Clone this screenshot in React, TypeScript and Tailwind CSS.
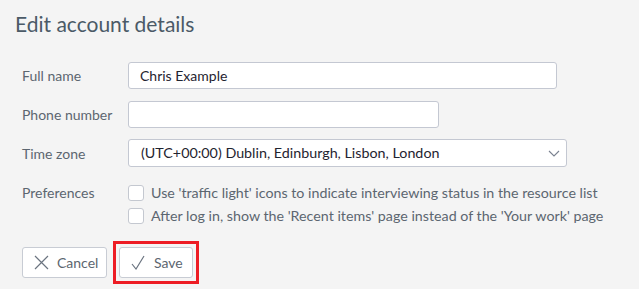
import React from "react";

const XIcon = () => (
  <svg width="15" height="15" viewBox="0 0 15 15" fill="none" stroke="#6b7480" strokeWidth="1.2">
    <path d="M1 1 L14 14 M14 1 L1 14" />
  </svg>
);

const CheckIcon = () => (
  <svg width="14" height="15" viewBox="0 0 14 15" fill="none" stroke="#6b7480" strokeWidth="1.2">
    <path d="M1 9 L5 14 L13 1" />
  </svg>
);

const Chevron = () => (
  <svg width="12" height="7" viewBox="0 0 12 7" fill="none" stroke="#7a8290" strokeWidth="1.1">
    <path d="M1 1 L6 6 L11 1" />
  </svg>
);

const Checkbox = ({ label }: { label: string }) => (
  <label className="flex items-center h-[23px]">
    <span className="w-4 h-4 rounded-[3px] border border-[#c4c8d0] bg-white shrink-0" />
    <span className="ml-[7px] text-[14.25px] text-[#5c6670]">{label}</span>
  </label>
);

export default function App() {
  return (
    <div
      className="w-[639px] h-[289px] bg-[#f4f4f4] overflow-hidden"
      style={{ fontFamily: "Lato, 'Noto Sans', sans-serif" }}
    >
      {/* Heading */}
      <h1 className="pl-[15px] pt-[9px] text-[21px] leading-[30px] text-[#4b5a67]">
        Edit account details
      </h1>

      <form className="pl-[22px] pt-[23px]">
        {/* Full name */}
        <div className="flex items-center">
          <span className="w-[106px] text-[14px] text-[#5c6670]">Full name</span>
          <div className="w-[429px] h-[27px] rounded-[3px] border border-[#c4c8d2] bg-white flex items-center pl-[11px] text-[14px] text-[#1f2430]">
            Chris Example
          </div>
        </div>

        {/* Phone */}
        <div className="flex items-center mt-[12px]">
          <span className="w-[106px] text-[14px] text-[#5c6670]">Phone number</span>
          <div className="w-[311px] h-[27px] rounded-[3px] border border-[#c4c8d2] bg-white" />
        </div>

        {/* Time zone */}
        <div className="flex items-center mt-[11px]">
          <span className="w-[106px] text-[14px] text-[#5c6670]">Time zone</span>
          <div className="w-[439px] h-[28px] rounded-[3px] border border-[#c4c8d2] bg-white flex items-center justify-between pl-[12px] pr-[6px] text-[14.3px] text-[#1f2430]">
            <span>(UTC+00:00) Dublin, Edinburgh, Lisbon, London</span>
            <Chevron />
          </div>
        </div>

        {/* Preferences */}
        <div className="flex mt-[14px]">
          <span className="w-[106px] h-[23px] flex items-center text-[14px] text-[#5c6670]">Preferences</span>
          <div className="flex flex-col">
            <Checkbox label="Use 'traffic light' icons to indicate interviewing status in the resource list" />
            <Checkbox label="After log in, show the 'Recent items' page instead of the 'Your work' page" />
          </div>
        </div>

        {/* Buttons */}
        <div className="flex items-center mt-[14px]">
          <button
            type="button"
            className="w-[85px] h-[31px] rounded-[3px] border border-[#c8ccd4] bg-white flex items-center pl-[11px] gap-[8px] text-[14px] text-[#5c6670]"
          >
            <XIcon />
            Cancel
          </button>
          <div className="ml-[6px] border-[3px] border-[#ed1c24] p-[3px]">
            <button
              type="button"
              className="w-[74px] h-[31px] rounded-[3px] border border-[#c8ccd4] bg-white flex items-center pl-[11px] gap-[9px] text-[14px] text-[#5c6670]"
            >
              <CheckIcon />
              Save
            </button>
          </div>
        </div>
      </form>
    </div>
  );
}
